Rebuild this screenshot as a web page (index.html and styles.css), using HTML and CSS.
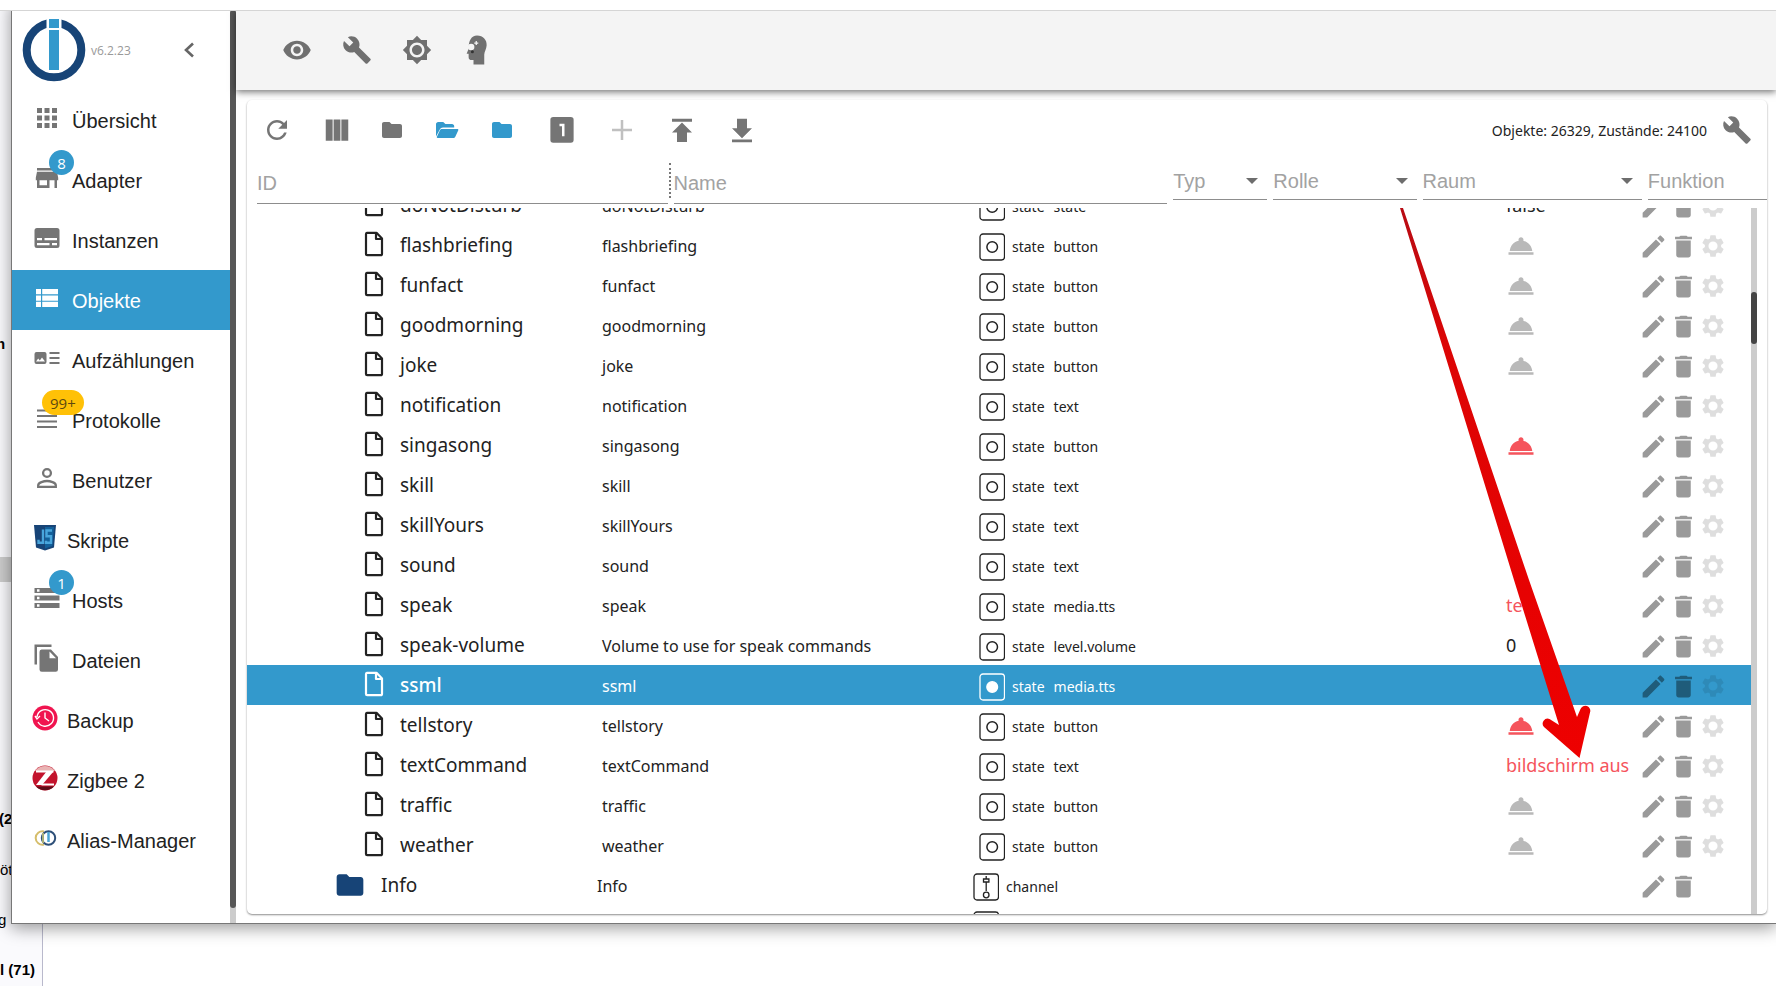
FILE: index.html
```html
<!DOCTYPE html>
<html lang="de">
<head>
<meta charset="utf-8">
<title>Objekte - ioBroker</title>
<link rel="stylesheet" href="styles.css">
</head>
<body>
<svg class="sprite" aria-hidden="true">
  <symbol id="eye" viewBox="0 0 24 24"><path d="M12 4.5C7 4.5 2.73 7.61 1 12c1.73 4.39 6 7.5 11 7.5s9.27-3.11 11-7.5c-1.73-4.39-6-7.5-11-7.5zM12 17c-2.76 0-5-2.24-5-5s2.24-5 5-5 5 2.24 5 5-2.24 5-5 5zm0-8c-1.66 0-3 1.34-3 3s1.34 3 3 3 3-1.34 3-3-1.34-3-3-3z"/></symbol>
  <symbol id="wrench" viewBox="0 0 24 24"><path d="M22.7 19l-9.1-9.1c.9-2.3.4-5-1.5-6.9-2-2-5-2.4-7.4-1.3L9 6 6 9 1.6 4.7C.4 7.1.9 10.1 2.9 12.1c1.9 1.9 4.6 2.4 6.9 1.5l9.1 9.1c.4.4 1 .4 1.4 0l2.3-2.3c.5-.4.5-1.1.1-1.4z"/></symbol>
  <symbol id="sun" viewBox="0 0 24 24"><path d="M20 8.69V4h-4.69L12 .69 8.69 4H4v4.69L.69 12 4 15.31V20h4.69L12 23.31 15.31 20H20v-4.69L23.31 12 20 8.69zM12 18c-3.31 0-6-2.69-6-6s2.69-6 6-6 6 2.69 6 6-2.69 6-6 6zm0-10c-2.21 0-4 1.79-4 4s1.79 4 4 4 4-1.79 4-4-1.79-4-4-4z"/></symbol>
  <symbol id="head" viewBox="0 0 24 24"><path d="M12 .3c5 0 8 3.6 7.7 8-.2 3-1.700 4.700-1.900 7.200V23.500H9.200V20H7.800c-1.800 0-2.500-.8-2.500-2.500v-2.600H3.700l1.600-4C5.200 4.500 7.500.3 12 .3z"/><circle cx="7.300" cy="9.500" r="2.600" fill="#f4f4f4"/><path d="M9.800 5.900h1.100V4.800h1v1.100H13v1h-1.100v1.100h-1V6.900H9.800z" fill="#f4f4f4"/><circle cx="8.300" cy="13.300" r="1.200" fill="#333"/></symbol>
  <symbol id="reload" viewBox="0 0 24 24"><path d="M17.650 6.350C16.200 4.900 14.210 4 12 4c-4.420 0-7.990 3.580-7.990 8s3.570 8 7.990 8c3.730 0 6.840-2.550 7.730-6h-2.080c-.82 2.330-3.040 4-5.650 4-3.310 0-6-2.690-6-6s2.690-6 6-6c1.660 0 3.140.69 4.220 1.780L13 11h7V4l-2.350 2.350z"/></symbol>
  <symbol id="columns" viewBox="0 0 24 24"><path d="M3 3.500h5.500v17H3zM9.300 3.500h5.400v17H9.300zM15.500 3.500H21v17h-5.500z"/></symbol>
  <symbol id="folder" viewBox="0 0 24 24"><path d="M9.500 4H4c-1.100 0-2 .9-2 2v12c0 1.100.9 2 2 2h16c1.100 0 2-.9 2-2V8c0-1.100-.9-2-2-2h-8.500z"/></symbol>
  <symbol id="folder-open" viewBox="0 0 24 24"><path d="M1 6.200C1 5 2 4 3.200 4h5l2.200 2H17c1.200 0 2.200 1 2.200 2.200v1.300H8c-1.500 0-2.600.7-3.200 2L1 18.500z"/><path d="M7 11h15.500c.7 0 1.100.7.800 1.300l-3 6.500c-.4.800-1 1.200-1.800 1.200H2.600c-.8 0-1-.6-.7-1.200l3-6.500c.4-.8 1.200-1.300 2.100-1.300z"/></symbol>
  <symbol id="one" viewBox="0 0 24 24"><path d="M19 1.500H5a2.300 2.300 0 0 0-2.300 2.300v16A2.300 2.300 0 0 0 5 22.200h14a2.300 2.300 0 0 0 2.300-2.400v-16A2.300 2.300 0 0 0 19 1.500zM14 17h-2V9h-2V7h4v10z"/></symbol>
  <symbol id="plus" viewBox="0 0 24 24"><path d="M20 13h-7v7h-2v-7H4v-2h7V4h2v7h7z"/></symbol>
  <symbol id="upload" viewBox="0 0 24 24"><path d="M4 3v2.300h16V3H4zm0 11h4v7.500h8V14h4l-8-8-8 8z"/></symbol>
  <symbol id="download" viewBox="0 0 24 24"><path d="M20 10.500h-4V3H8v7.500H4l8 8 8-8zM4 19.500v2.300h16v-2.300H4z"/></symbol>
  <symbol id="pencil" viewBox="0 0 24 24"><path d="M3 17.250V21h3.750L17.810 9.940l-3.750-3.750L3 17.250zM20.710 7.040c.39-.39.39-1.020 0-1.410l-2.340-2.340c-.39-.39-1.020-.39-1.410 0l-1.830 1.830 3.750 3.750 1.830-1.830z"/></symbol>
  <symbol id="trash" viewBox="0 0 24 24"><path d="M6 19c0 1.100.9 2 2 2h8c1.100 0 2-.9 2-2V7H6v12zM19 4h-3.500l-1-1h-5l-1 1H5v2h14V4z"/></symbol>
  <symbol id="gear" viewBox="0 0 24 24"><path d="M19.430 12.980c.04-.32.07-.64.07-.98s-.03-.66-.07-.98l2.110-1.650c.19-.15.24-.42.12-.64l-2-3.460c-.12-.22-.39-.3-.61-.22l-2.490 1c-.52-.4-1.080-.73-1.690-.98l-.38-2.650C14.460 2.180 14.250 2 14 2h-4c-.25 0-.46.18-.49.42l-.38 2.650c-.61.25-1.170.59-1.690.98l-2.490-1c-.23-.09-.49 0-.61.22l-2 3.460c-.13.22-.07.49.12.64l2.110 1.650c-.04.32-.07.65-.07.98s.03.66.07.98l-2.110 1.650c-.19.15-.24.42-.12.64l2 3.460c.12.22.39.3.61.22l2.490-1c.52.4 1.080.73 1.690.98l.38 2.650c.03.24.24.42.49.42h4c.25 0 .46-.18.49-.42l.38-2.650c.61-.25 1.170-.59 1.690-.98l2.490 1c.23.09.49 0 .61-.22l2-3.460c.12-.22.07-.49-.12-.64l-2.110-1.650zM12 16.200a4.200 4.200 0 1 1 0-8.400 4.200 4.200 0 0 1 0 8.400z"/></symbol>
  <symbol id="bell" viewBox="0 0 24 24"><path d="M2 17h20v2H2zm11.840-9.210c.1-.24.16-.51.16-.79 0-1.100-.9-2-2-2s-2 .9-2 2c0 .28.06.55.16.79C6.250 8.600 3.270 11.930 3 16h18c-.27-4.070-3.250-7.400-7.160-8.210z"/></symbol>
  <symbol id="doc" viewBox="0 0 20 26"><path d="M3 1.800h9.500L18 7.500V23a1.200 1.200 0 0 1-1.200 1.200H3.200A1.200 1.200 0 0 1 2 23V3a1.200 1.200 0 0 1 1-1.200zM12 2v6h6" fill="none" stroke="currentColor" stroke-width="2.200" stroke-linejoin="round"/></symbol>
  <symbol id="state" viewBox="0 0 26 28"><rect x="1" y="1" width="24.500" height="26" rx="3" fill="none" stroke="currentColor" stroke-width="1.300"/><circle cx="13.200" cy="14" r="5.300" stroke="currentColor" stroke-width="1.500"/></symbol>
  <symbol id="channel" viewBox="0 0 26 28"><g fill="none" stroke="currentColor" stroke-width="1.300"><rect x="1" y="1" width="24.500" height="26" rx="3"/><path d="M13.200 3v3M13.200 9v9M10.500 6h5.400v3h-5.400z"/><circle cx="13.200" cy="22" r="2.800"/></g></symbol>
</svg>

<aside class="backdrop">
  <b class="peek peek-n">n</b>
  <i class="peek-bar"></i>
  <b class="peek peek-two">(2</b>
  <span class="peek peek-ot">öt</span>
  <span class="peek peek-g">g</span>
  <b class="peek peek-last">l (71)</b>
</aside>

<div class="window">
  <nav class="sidebar">
    <header class="brand">
      <svg class="logo" viewBox="0 0 64 64"><circle cx="32" cy="32" r="27.300" fill="none" stroke="#174477" stroke-width="8"/><path d="M24.500 0h15v14h-15z" fill="#fff"/><path d="M27 1h10v9H27zM27 12h10v40H27z" fill="#3399cc"/><path d="M25.500 52.500h13v1.500h-13z" fill="#fff"/></svg>
      <span class="version">v6.2.23</span>
      <button class="collapse" aria-label="Menü einklappen"><svg viewBox="0 0 12 16"><path d="M10 1.500L3 8l7 6.500" fill="none" stroke="currentColor" stroke-width="2.600"/></svg></button>
    </header>
    <a class="item" href="#"><svg viewBox="0 0 30 30"><path d="M5 5h5v5H5zM12.500 5h5v5h-5zM20 5h5v5h-5zM5 12.500h5v5H5zM12.500 12.500h5v5h-5zM20 12.500h5v5h-5zM5 20h5v5H5zM12.500 20h5v5h-5zM20 20h5v5h-5z"/></svg>Übersicht</a>
    <a class="item" href="#"><svg viewBox="0 0 30 30"><path d="M5 5h20v2.500H5zM5 8.800h20l1.200 6v2.400H25V25h-2.500v-7.800h-5V25H5v-7.800H3.800v-2.400zM7.500 17.200v5H15v-5z"/></svg>Adapter<span class="badge">8</span></a>
    <a class="item" href="#"><svg viewBox="0 0 30 30"><path fill-rule="evenodd" d="M5 5h20a2.500 2.500 0 0 1 2.500 2.500v15A2.500 2.500 0 0 1 25 25H5a2.500 2.500 0 0 1-2.500-2.500v-15A2.500 2.500 0 0 1 5 5zm0 10v2.200h5V15zm7.500 0v2.200H25V15zM5 20v2.200h12.500V20zm15 0v2.200h5V20z"/></svg>Instanzen</a>
    <a class="item active" href="#"><svg viewBox="0 0 30 30"><path d="M4 6h5v5.300H4zM10.200 6H26v5.300H10.200zM4 12.400h5v5.300H4zM10.200 12.400H26v5.300H10.200zM4 18.800h5V24H4zM10.200 18.800H26V24H10.200z"/></svg>Objekte</a>
    <a class="item" href="#"><svg viewBox="0 0 30 30"><path fill-rule="evenodd" d="M4.500 9h8a2 2 0 0 1 2 2v8a2 2 0 0 1-2 2h-8a2 2 0 0 1-2-2v-8a2 2 0 0 1 2-2zM4 18.500h9l-3-4-2.200 3-1.600-2zM17.500 9h10v2h-10zM17.500 14h10v2h-10zM17.500 19h10v2h-10z"/></svg>Aufzählungen</a>
    <a class="item" href="#"><svg viewBox="0 0 30 30"><path d="M5 6.500h20v2H5zM5 12h20v2H5zM5 17.500h20v2H5zM5 23h20v2H5z"/></svg>Protokolle<span class="badge warn">99+</span></a>
    <a class="item" href="#"><svg viewBox="0 0 30 30"><g fill="none" stroke="currentColor" stroke-width="2.300"><circle cx="15" cy="10" r="3.900"/><path d="M6.200 23.800v-1.600c0-2.600 5.800-4.200 8.800-4.200s8.800 1.600 8.800 4.200v1.600z"/></g></svg>Benutzer</a>
    <a class="item plugin" href="#"><svg viewBox="0 0 26 26"><path d="M2 0h22l-2 22.500L13 25.500l-9-3z" fill="#174477"/><path d="M13 2h9l-1.600 19L13 23.500z" fill="#12609b"/><path d="M11 4.500v13.200H6.500v-3M20 5.500h-5.500v5.800H19v6.400h-5v-2" fill="none" stroke="#48a5dc" stroke-width="2.400"/></svg>Skripte</a>
    <a class="item" href="#"><svg viewBox="0 0 30 30"><path fill-rule="evenodd" d="M2.500 5h25v5h-25zM5 6.300v2.500h2.500V6.300zM2.500 12.500h25v5h-25zM5 13.700v2.500h2.500v-2.500zM2.500 20h25v5h-25zM5 21.300v2.500h2.500v-2.500z"/></svg>Hosts<span class="badge">1</span></a>
    <a class="item" href="#"><svg viewBox="0 0 30 30"><path fill-rule="evenodd" d="M2.500 1.500h17V4H5v17.500H2.500zM9.500 6.500h9.500l7 7.500v12.500a2.300 2.300 0 0 1-2.300 2.300H9.800A2.300 2.300 0 0 1 7.500 26.500V9a2.500 2.500 0 0 1 2-2.500zM17.500 8.500v6.700h6.500z"/></svg>Dateien</a>
    <a class="item plugin" href="#"><svg viewBox="0 0 26 26"><circle cx="13" cy="13" r="12.500" fill="#f0144f"/><g fill="none" stroke="#fff" stroke-width="1.400"><path d="M6 17a8.300 8.300 0 1 0-1-5M3 11l2 3 3-3M13 7.500V13l4 3"/></g></svg>Backup</a>
    <a class="item plugin" href="#"><svg viewBox="0 0 26 26"><circle cx="13" cy="13" r="12.500" fill="#c3132c"/><path d="M3 6a12.500 12.500 0 0 1 20 0z" fill="#e9b3b3"/><path d="M4 6.500h17.500M9.500 19.500H22" fill="none" stroke="#fff" stroke-width="2"/><path d="M14.500 6.500h7L10 20H4z" fill="#fff"/><path d="M4 21.500h18a12.500 12.500 0 0 1-18 0z" fill="#5e0c17"/></svg>Zigbee 2</a>
    <a class="item plugin" href="#"><svg viewBox="0 0 26 26"><g fill="none" stroke-width="2"><path d="M12 6.500a6.700 6.700 0 1 0 0 13" stroke="#d5bd6a"/><ellipse cx="16.500" cy="13" rx="6.700" ry="6.700" stroke="#2e4f78"/><path d="M11 8v10" stroke="#a7ad76"/><path d="M16.500 7v10" stroke="#4aa3d3" stroke-width="2.500"/></g></svg>Alias-Manager</a>
  </nav>
  <div class="menu-scroll"><i></i></div>

  <main class="main">
    <header class="appbar">
      <button aria-label="Sichtbarkeit"><svg><use href="#eye"/></svg></button>
      <button aria-label="Einstellungen"><svg><use href="#wrench"/></svg></button>
      <button aria-label="Farbschema"><svg><use href="#sun"/></svg></button>
      <button aria-label="Expertenmodus"><svg><use href="#head"/></svg></button>
    </header>

    <section class="card">
      <div class="toolbar">
        <button aria-label="Aktualisieren"><svg><use href="#reload"/></svg></button>
        <button aria-label="Spalten"><svg><use href="#columns"/></svg></button>
        <button class="small" aria-label="Alle schließen"><svg><use href="#folder"/></svg></button>
        <button class="small blue" aria-label="Alle öffnen"><svg><use href="#folder-open"/></svg></button>
        <button class="small blue" aria-label="Ebene schließen"><svg><use href="#folder"/></svg></button>
        <button aria-label="Zustandsansicht"><svg><use href="#one"/></svg></button>
        <button class="faded" aria-label="Hinzufügen" disabled><svg><use href="#plus"/></svg></button>
        <button aria-label="Importieren"><svg><use href="#upload"/></svg></button>
        <button aria-label="Exportieren"><svg><use href="#download"/></svg></button>
        <span class="count">Objekte: 26329, Zustände: 24100</span>
        <button class="config" aria-label="Spalten konfigurieren"><svg><use href="#wrench"/></svg></button>
      </div>

      <div class="filters">
        <input type="text" placeholder="ID" aria-label="ID">
        <label class="name-filter"><input type="text" placeholder="Name" aria-label="Name"></label>
        <label class="pick"><select aria-label="Typ"><option>Typ</option></select></label>
        <label class="pick"><select aria-label="Rolle"><option>Rolle</option></select></label>
        <label class="pick"><select aria-label="Raum"><option>Raum</option></select></label>
        <label class="pick bare"><select aria-label="Funktion"><option>Funktion</option></select></label>
      </div>

      <div class="list">
        <div class="rows">
        <table>
          <colgroup><col class="c-id"><col class="c-name"><col><col class="c-value"><col class="c-actions"></colgroup>
          <tbody>
          <tr><td><svg class="doc"><use href="#doc"/></svg>doNotDisturb</td><td>doNotDisturb</td><td><svg class="kind"><use href="#state"/></svg>state<span>state</span></td><td>false</td><td><button aria-label="Bearbeiten"><svg><use href="#pencil"/></svg></button><button aria-label="Löschen"><svg><use href="#trash"/></svg></button><button class="gear" aria-label="Einstellungen"><svg><use href="#gear"/></svg></button></td></tr>
          <tr><td><svg class="doc"><use href="#doc"/></svg>flashbriefing</td><td>flashbriefing</td><td><svg class="kind"><use href="#state"/></svg>state<span>button</span></td><td><svg class="bell"><use href="#bell"/></svg></td><td><button aria-label="Bearbeiten"><svg><use href="#pencil"/></svg></button><button aria-label="Löschen"><svg><use href="#trash"/></svg></button><button class="gear" aria-label="Einstellungen"><svg><use href="#gear"/></svg></button></td></tr>
          <tr><td><svg class="doc"><use href="#doc"/></svg>funfact</td><td>funfact</td><td><svg class="kind"><use href="#state"/></svg>state<span>button</span></td><td><svg class="bell"><use href="#bell"/></svg></td><td><button aria-label="Bearbeiten"><svg><use href="#pencil"/></svg></button><button aria-label="Löschen"><svg><use href="#trash"/></svg></button><button class="gear" aria-label="Einstellungen"><svg><use href="#gear"/></svg></button></td></tr>
          <tr><td><svg class="doc"><use href="#doc"/></svg>goodmorning</td><td>goodmorning</td><td><svg class="kind"><use href="#state"/></svg>state<span>button</span></td><td><svg class="bell"><use href="#bell"/></svg></td><td><button aria-label="Bearbeiten"><svg><use href="#pencil"/></svg></button><button aria-label="Löschen"><svg><use href="#trash"/></svg></button><button class="gear" aria-label="Einstellungen"><svg><use href="#gear"/></svg></button></td></tr>
          <tr><td><svg class="doc"><use href="#doc"/></svg>joke</td><td>joke</td><td><svg class="kind"><use href="#state"/></svg>state<span>button</span></td><td><svg class="bell"><use href="#bell"/></svg></td><td><button aria-label="Bearbeiten"><svg><use href="#pencil"/></svg></button><button aria-label="Löschen"><svg><use href="#trash"/></svg></button><button class="gear" aria-label="Einstellungen"><svg><use href="#gear"/></svg></button></td></tr>
          <tr><td><svg class="doc"><use href="#doc"/></svg>notification</td><td>notification</td><td><svg class="kind"><use href="#state"/></svg>state<span>text</span></td><td></td><td><button aria-label="Bearbeiten"><svg><use href="#pencil"/></svg></button><button aria-label="Löschen"><svg><use href="#trash"/></svg></button><button class="gear" aria-label="Einstellungen"><svg><use href="#gear"/></svg></button></td></tr>
          <tr><td><svg class="doc"><use href="#doc"/></svg>singasong</td><td>singasong</td><td><svg class="kind"><use href="#state"/></svg>state<span>button</span></td><td class="unacked"><svg class="bell"><use href="#bell"/></svg></td><td><button aria-label="Bearbeiten"><svg><use href="#pencil"/></svg></button><button aria-label="Löschen"><svg><use href="#trash"/></svg></button><button class="gear" aria-label="Einstellungen"><svg><use href="#gear"/></svg></button></td></tr>
          <tr><td><svg class="doc"><use href="#doc"/></svg>skill</td><td>skill</td><td><svg class="kind"><use href="#state"/></svg>state<span>text</span></td><td></td><td><button aria-label="Bearbeiten"><svg><use href="#pencil"/></svg></button><button aria-label="Löschen"><svg><use href="#trash"/></svg></button><button class="gear" aria-label="Einstellungen"><svg><use href="#gear"/></svg></button></td></tr>
          <tr><td><svg class="doc"><use href="#doc"/></svg>skillYours</td><td>skillYours</td><td><svg class="kind"><use href="#state"/></svg>state<span>text</span></td><td></td><td><button aria-label="Bearbeiten"><svg><use href="#pencil"/></svg></button><button aria-label="Löschen"><svg><use href="#trash"/></svg></button><button class="gear" aria-label="Einstellungen"><svg><use href="#gear"/></svg></button></td></tr>
          <tr><td><svg class="doc"><use href="#doc"/></svg>sound</td><td>sound</td><td><svg class="kind"><use href="#state"/></svg>state<span>text</span></td><td></td><td><button aria-label="Bearbeiten"><svg><use href="#pencil"/></svg></button><button aria-label="Löschen"><svg><use href="#trash"/></svg></button><button class="gear" aria-label="Einstellungen"><svg><use href="#gear"/></svg></button></td></tr>
          <tr><td><svg class="doc"><use href="#doc"/></svg>speak</td><td>speak</td><td><svg class="kind"><use href="#state"/></svg>state<span>media.tts</span></td><td class="unacked">te</td><td><button aria-label="Bearbeiten"><svg><use href="#pencil"/></svg></button><button aria-label="Löschen"><svg><use href="#trash"/></svg></button><button class="gear" aria-label="Einstellungen"><svg><use href="#gear"/></svg></button></td></tr>
          <tr><td><svg class="doc"><use href="#doc"/></svg>speak-volume</td><td>Volume to use for speak commands</td><td><svg class="kind"><use href="#state"/></svg>state<span>level.volume</span></td><td>0</td><td><button aria-label="Bearbeiten"><svg><use href="#pencil"/></svg></button><button aria-label="Löschen"><svg><use href="#trash"/></svg></button><button class="gear" aria-label="Einstellungen"><svg><use href="#gear"/></svg></button></td></tr>
          <tr class="selected"><td><svg class="doc"><use href="#doc"/></svg>ssml</td><td>ssml</td><td><svg class="kind"><use href="#state"/></svg>state<span>media.tts</span></td><td></td><td><button aria-label="Bearbeiten"><svg><use href="#pencil"/></svg></button><button aria-label="Löschen"><svg><use href="#trash"/></svg></button><button class="gear" aria-label="Einstellungen"><svg><use href="#gear"/></svg></button></td></tr>
          <tr><td><svg class="doc"><use href="#doc"/></svg>tellstory</td><td>tellstory</td><td><svg class="kind"><use href="#state"/></svg>state<span>button</span></td><td class="unacked"><svg class="bell"><use href="#bell"/></svg></td><td><button aria-label="Bearbeiten"><svg><use href="#pencil"/></svg></button><button aria-label="Löschen"><svg><use href="#trash"/></svg></button><button class="gear" aria-label="Einstellungen"><svg><use href="#gear"/></svg></button></td></tr>
          <tr><td><svg class="doc"><use href="#doc"/></svg>textCommand</td><td>textCommand</td><td><svg class="kind"><use href="#state"/></svg>state<span>text</span></td><td class="unacked">bildschirm aus</td><td><button aria-label="Bearbeiten"><svg><use href="#pencil"/></svg></button><button aria-label="Löschen"><svg><use href="#trash"/></svg></button><button class="gear" aria-label="Einstellungen"><svg><use href="#gear"/></svg></button></td></tr>
          <tr><td><svg class="doc"><use href="#doc"/></svg>traffic</td><td>traffic</td><td><svg class="kind"><use href="#state"/></svg>state<span>button</span></td><td><svg class="bell"><use href="#bell"/></svg></td><td><button aria-label="Bearbeiten"><svg><use href="#pencil"/></svg></button><button aria-label="Löschen"><svg><use href="#trash"/></svg></button><button class="gear" aria-label="Einstellungen"><svg><use href="#gear"/></svg></button></td></tr>
          <tr><td><svg class="doc"><use href="#doc"/></svg>weather</td><td>weather</td><td><svg class="kind"><use href="#state"/></svg>state<span>button</span></td><td><svg class="bell"><use href="#bell"/></svg></td><td><button aria-label="Bearbeiten"><svg><use href="#pencil"/></svg></button><button aria-label="Löschen"><svg><use href="#trash"/></svg></button><button class="gear" aria-label="Einstellungen"><svg><use href="#gear"/></svg></button></td></tr>
          <tr class="parent"><td><svg class="dir"><use href="#folder"/></svg>Info</td><td>Info</td><td><svg class="kind"><use href="#channel"/></svg>channel</td><td></td><td><button aria-label="Bearbeiten"><svg><use href="#pencil"/></svg></button><button aria-label="Löschen"><svg><use href="#trash"/></svg></button></td></tr>
          <tr class="parent"><td></td><td></td><td><svg class="kind"><use href="#channel"/></svg></td><td></td><td></td></tr>
          </tbody>
        </table>
        </div>
        <div class="list-scroll"><i></i></div>
        <svg class="pointer" viewBox="0 0 200 560"><defs><linearGradient id="red" x1="0" y1="0" x2="0" y2="1"><stop offset="0" stop-color="#b80c14"/><stop offset=".25" stop-color="#dc0505"/><stop offset="1" stop-color="#ee0000"/></linearGradient></defs><path d="M0 0h3L129 372L177 509L180.500 501A5 5 0 0 1 190 504.500L179.500 550L144 519A5 5 0 0 1 149.500 511L159 517L114 372z" fill="url(#red)"/></svg>
      </div>
    </section>
  </main>
</div>
</body>
</html>
```
FILE: styles.css
```css
* { box-sizing: border-box; }

body {
  margin: 0;
  height: 100vh;
  overflow: hidden;
  background: #fff;
  color: #222;
  font-family: "Liberation Sans", Arial, sans-serif;
  font-size: 20px;
}

svg { fill: currentColor; }
.sprite { display: none; }

button {
  display: inline-flex;
  align-items: center;
  justify-content: center;
  padding: 0;
  border: 0;
  background: none;
  color: inherit;
}

/* page behind the browser window */
.backdrop {
  position: absolute;
  inset: 0 auto 0 0;
  width: 43px;
  overflow: hidden;
  border-right: 1px solid #b9b9cc;
  background: #fafafd;
  color: #000;
  font-size: 15px;
  line-height: 20px;
}
.peek { position: absolute; left: 0; white-space: nowrap; }
.peek-n { top: 334px; left: -4px; }
.peek-two { top: 809px; left: -1px; }
.peek-ot { top: 860px; }
.peek-g { top: 910px; left: -2px; }
.peek-last { top: 960px; }
.peek-bar {
  position: absolute;
  top: 557px;
  left: 0;
  width: 100%;
  height: 25px;
  background: #ccc;
}

.window {
  position: relative;
  display: flex;
  height: calc(100vh - 62px);
  border: 1px solid #777;
  border-width: 0 0 1px 1px;
  margin-left: 11px;
  background: #fff;
  box-shadow: 0 4px 16px rgba(0, 0, 0, .4);
}
.window::before {
  content: "";
  position: absolute;
  inset: 0 0 auto -12px;
  height: 10px;
  border-bottom: 1px solid #d5d5d5;
  background: #fff;
}

.sidebar { width: 218px; padding-top: 10px; }
.brand {
  display: flex;
  align-items: center;
  height: 80px;
  padding-left: 10px;
}
.logo { width: 64px; height: 64px; }
.version {
  flex: 1;
  padding-left: 5px;
  color: #999;
  font: 12px "Open Sans", sans-serif;
}
.collapse { width: 12px; height: 16px; margin-right: 35px; color: #666; }
.item {
  position: relative;
  display: flex;
  align-items: center;
  height: 60px;
  padding: 2px 0 0 20px;
  color: #222;
  text-decoration: none;
}
.item svg {
  width: 30px;
  height: 30px;
  margin: 0 10px 6px 0;
  color: #757575;
}
.item.plugin svg { width: 26px; height: 26px; margin-right: 9px; }
.item.active { background: #3399cc; color: #fff; }
.item.active svg { color: #fff; }
.badge {
  position: absolute;
  top: 0;
  left: 37px;
  min-width: 25px;
  height: 25px;
  padding: 0 8px;
  border-radius: 13px;
  background: #3399cc;
  color: #fff;
  font: 15px/26px "Open Sans", sans-serif;
  text-align: center;
}
.badge.warn { left: 30px; background: #ffc107; color: #5d4a10; }

.menu-scroll { width: 6px; padding-top: 10px; background: #ccc; }
.menu-scroll i {
  display: block;
  height: calc(100% - 15px);
  border-radius: 3px;
  background: #575757;
}

.main {
  flex: 1;
  min-width: 0;
  display: flex;
  flex-direction: column;
  padding-top: 10px;
}
.appbar {
  display: flex;
  flex: none;
  height: 80px;
  padding-left: 31px;
  background: #f4f4f4;
  box-shadow: 0 2px 7px rgba(0, 0, 0, .55);
  color: #707070;
}
.appbar button { width: 60px; height: 80px; }
.appbar svg { width: 30px; height: 30px; }

.card {
  flex: 1;
  min-height: 0;
  display: flex;
  flex-direction: column;
  margin: 10px 9px 9px 11px;
  border-radius: 5px;
  background: #fff;
  box-shadow: 0 1px 2px rgba(0, 0, 0, .45);
  overflow: hidden;
}
.toolbar {
  display: flex;
  align-items: center;
  height: 60px;
  color: #757575;
}
.toolbar button { width: 60px; height: 60px; }
.toolbar svg { width: 30px; height: 30px; }
.toolbar .small { width: 55px; padding-right: 5px; }
.toolbar .small svg { width: 24px; height: 24px; }
.toolbar .blue { color: #3399cc; }
.toolbar .faded { opacity: .45; }
.toolbar .count {
  margin-left: auto;
  color: #222;
  font: 14px "Noto Sans", sans-serif;
}

.filters {
  display: grid;
  grid-template-columns: 410fr 493fr 94fr 143fr 219fr 119fr;
  gap: 6px;
  flex: none;
  height: 48px;
  padding-left: 10px;
}
.filters input,
.filters select {
  width: 100%;
  height: 44px;
  padding: 4px 0 0;
  border: 0;
  border-bottom: 1px solid #8d8d8d;
  border-radius: 0;
  background: none;
  color: #a2a2a2;
  font: 20px "Liberation Sans", Arial, sans-serif;
  outline: 0;
  appearance: none;
}
.filters ::placeholder { color: #a2a2a2; opacity: 1; }
.filters select { height: 40px; padding-top: 2px; }
.pick, .name-filter { position: relative; }
.pick::after {
  content: "";
  position: absolute;
  top: 18px;
  right: 9px;
  border: 6px solid transparent;
  border-top-color: #6d6d6d;
  border-bottom: 0;
}
.pick.bare::after { display: none; }
.name-filter::before {
  content: "";
  position: absolute;
  top: 3px;
  left: -5px;
  height: 35px;
  border-left: 2px dotted #777;
}

.list { position: relative; display: flex; flex: 1; min-height: 0; }
.rows {
  flex: 1;
  display: flex;
  flex-direction: column;
  overflow: hidden;
}
table {
  width: 100%;
  margin-top: -23px;
  border-collapse: collapse;
  table-layout: fixed;
  font-family: "Noto Sans", sans-serif;
  font-size: 16px;
}
.c-id { width: 350px; }
.c-name { width: 376px; }
.c-value { width: 132px; }
.c-actions { width: 113px; }
tr, td { height: 40px; }
td {
  padding: 2px 0 0;
  white-space: nowrap;
  line-height: 36px;
  vertical-align: baseline;
}
td:nth-child(1) { padding-left: 117px; font-size: 19px; }
td:nth-child(2) { padding-left: 5px; }
td:nth-child(3) { padding-left: 6px; font-size: 14px; }
td:nth-child(3) span { margin-left: 9px; }
td:nth-child(4) { font-size: 18px; }
.doc { width: 20px; height: 26px; margin-right: 16px; vertical-align: -5px; }
.dir { width: 32px; height: 32px; margin-right: 15px; vertical-align: -9px; color: #174477; }
.kind { width: 26px; height: 28px; margin-right: 7px; vertical-align: -9px; fill: none; }
.bell { width: 30px; height: 30px; vertical-align: -9px; color: #b9b9b9; }
.unacked, .unacked .bell { color: #f5545c; }
.parent td:nth-child(1) { padding-left: 87px; }
.parent td:nth-child(2), .parent td:nth-child(3) { padding-left: 0; }
td button { width: 30px; height: 30px; vertical-align: top; color: #9a9a9a; }
td:nth-child(5) { padding-top: 6px; vertical-align: top; }
td button svg { width: 29px; height: 29px; flex: none; }
td .gear { color: #dedede; }
td .gear svg { width: 26px; height: 26px; }
td:nth-child(5) { line-height: 30px; }
.selected { background: #3399cc; color: #fff; }
.selected td:nth-child(1) { font-weight: 500; }
.selected .kind { fill: #fff; }
.selected button { color: #1f5c7a; }
.selected .gear { color: #2e8ab8; }

.list-scroll {
  flex: none;
  width: 6px;
  margin-right: 10px;
  padding-top: 84px;
  background: #ccc;
}
.list-scroll i {
  display: block;
  height: 52px;
  border-radius: 3px;
  background: #444;
}

/* annotation arrow lying over the list */
.pointer {
  position: absolute;
  top: 0;
  right: 167px;
  width: 200px;
  height: 560px;
}
```
